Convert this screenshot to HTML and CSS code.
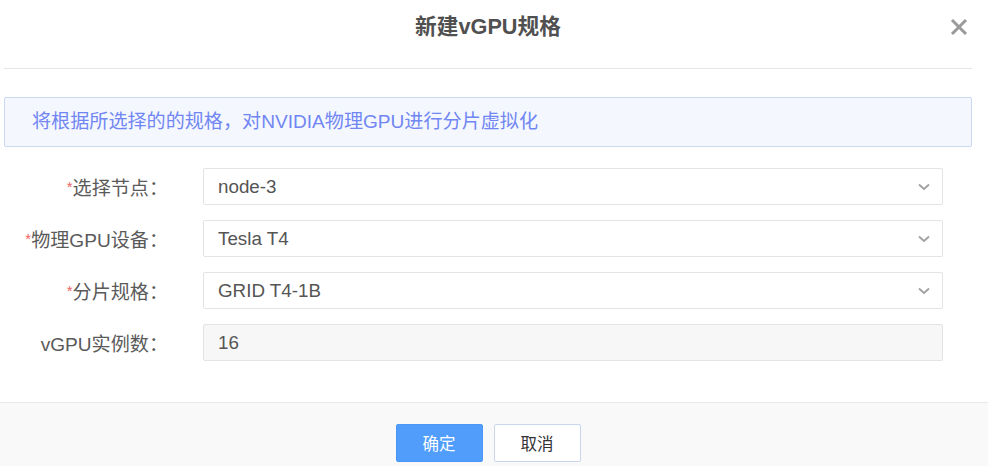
FILE: index.html
```html
<!DOCTYPE html>
<html lang="zh-CN">
<head>
<meta charset="utf-8">
<title>新建vGPU规格</title>
<link rel="stylesheet" href="styles.css">
</head>
<body>
<div class="dialog">
  <div class="header">
    <h1 class="title">新建vGPU规格</h1>
    <span class="close" aria-label="close">
      <svg width="18" height="18" viewBox="0 0 18 18"><path d="M2 2 L16 16 M16 2 L2 16" stroke="#9a9a9a" stroke-width="3" stroke-linecap="butt"/></svg>
    </span>
  </div>
  <div class="info">将根据所选择的的规格，对NVIDIA物理GPU进行分片虚拟化</div>
  <div class="form">
    <div class="row">
      <label class="label"><span class="req">*</span>选择节点：</label>
      <div class="field select"><span class="value">node-3</span><svg class="chev" width="12" height="8" viewBox="0 0 12 8"><path d="M1 1.5 L6 6 L11 1.5" fill="none" stroke="#a0a0a0" stroke-width="1.8"/></svg></div>
    </div>
    <div class="row">
      <label class="label"><span class="req">*</span>物理GPU设备：</label>
      <div class="field select"><span class="value">Tesla T4</span><svg class="chev" width="12" height="8" viewBox="0 0 12 8"><path d="M1 1.5 L6 6 L11 1.5" fill="none" stroke="#a0a0a0" stroke-width="1.8"/></svg></div>
    </div>
    <div class="row">
      <label class="label"><span class="req">*</span>分片规格：</label>
      <div class="field select"><span class="value">GRID T4-1B</span><svg class="chev" width="12" height="8" viewBox="0 0 12 8"><path d="M1 1.5 L6 6 L11 1.5" fill="none" stroke="#a0a0a0" stroke-width="1.8"/></svg></div>
    </div>
    <div class="row">
      <label class="label">vGPU实例数：</label>
      <div class="field disabled"><span class="value">16</span></div>
    </div>
  </div>
  <div class="footer">
    <button class="btn primary">确定</button>
    <button class="btn">取消</button>
  </div>
</div>
</body>
</html>
```
FILE: styles.css
```css
html, body {
  margin: 0;
  padding: 0;
  background: #ffffff;
}
body {
  font-family: "Liberation Sans", "Noto Sans CJK SC", sans-serif;
  color: #555;
}
.dialog {
  width: 988px;
}
.header {
  position: relative;
  margin: 0 16px 0 4px;
  height: 68px;
  border-bottom: 1px solid #e6e6e6;
  display: flex;
  justify-content: center;
  align-items: flex-start;
}
.title {
  margin: 12px 0 0;
  font-size: 21.7px;
  line-height: 30px;
  font-weight: bold;
  color: #505050;
}
.close {
  position: absolute;
  right: 4px;
  top: 18px;
  width: 18px;
  height: 18px;
  display: block;
}
.close svg { display: block; }
.info {
  margin: 28px 16px 0 4px;
  height: 48px;
  border: 1px solid #c9d8f3;
  border-radius: 2px;
  background: #f4f8fe;
  color: #7186f3;
  font-size: 19.1px;
  line-height: 48px;
  padding-left: 27px;
}
.form {
  margin-top: 21px;
  padding: 0 0 41px 4px;
  display: flex;
  flex-direction: column;
  gap: 15px;
}
.row {
  display: flex;
  align-items: center;
  gap: 35px;
  height: 37px;
}
.label {
  width: 164px;
  text-align: right;
  font-size: 19.1px;
  color: #5a5a5a;
  white-space: nowrap;
}
.req {
  color: #f06565;
  font-size: 15px;
  vertical-align: 3px;
}
.field {
  width: 740px;
  height: 37px;
  box-sizing: border-box;
  border: 1px solid #e3e3e3;
  border-radius: 2px;
  background: #fff;
  display: flex;
  align-items: center;
  justify-content: space-between;
  padding: 0 12px 0 14px;
  font-size: 18.8px;
  color: #555;
}
.field.disabled {
  background: #f7f7f7;
}
.chev { display: block; }
.footer {
  border-top: 1px solid #e8e8e8;
  background: #f9f9f9;
  padding: 21px 16px 20px 4px;
  display: flex;
  justify-content: center;
  gap: 11px;
}
.btn {
  width: 87px;
  height: 38px;
  box-sizing: border-box;
  border: 1px solid #c9d6ee;
  border-radius: 2px;
  background: #fff;
  color: #333;
  font-family: "Liberation Sans", "Noto Sans CJK SC", sans-serif;
  font-size: 16.5px;
  padding: 0;
}
.btn.primary {
  background: #519dfc;
  border-color: #4a97f7;
  color: #fff;
}
```
